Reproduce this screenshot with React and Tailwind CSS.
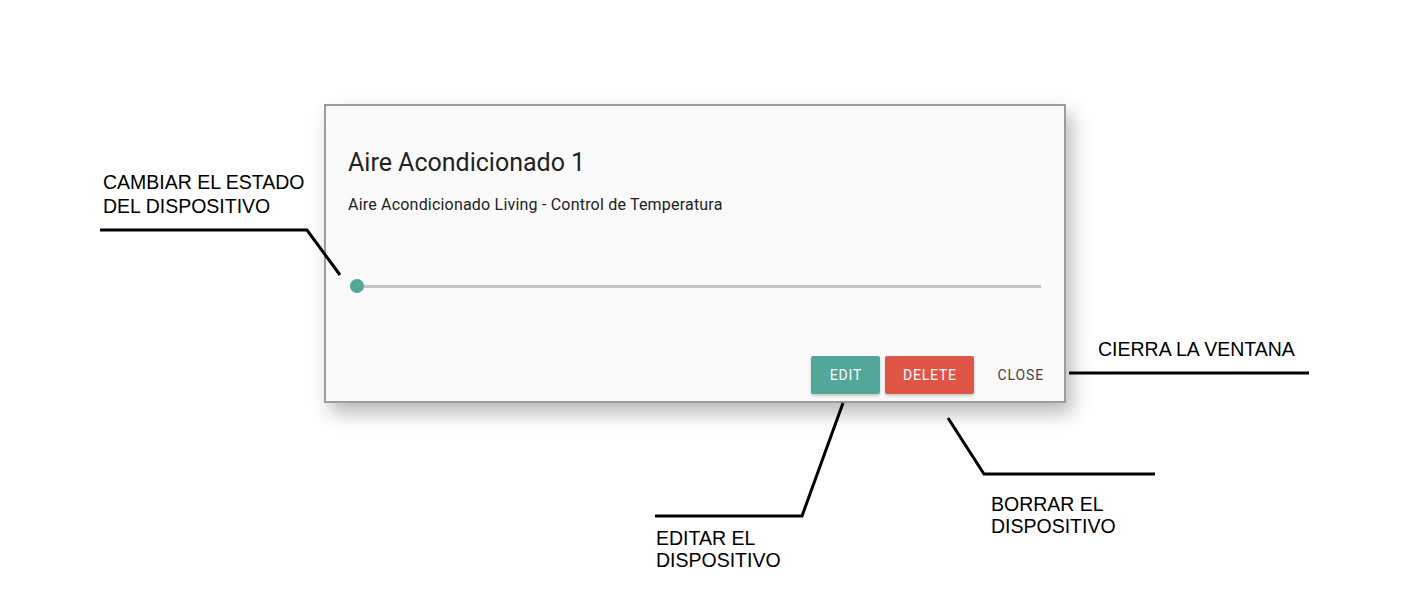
import React from "react";

const label = "absolute text-[19.5px] text-black uppercase whitespace-nowrap";
const labelFont = { fontFamily: '"Liberation Sans", Arial, sans-serif' };

export default function App() {
  return (
    <div className="relative w-[1406px] h-[614px] bg-white overflow-hidden" style={{ fontFamily: 'Roboto, "Noto Sans", sans-serif' }}>
      {/* Dialog */}
      <div className="ml-[324px] pt-[104px]">
        <div className="w-[742px] h-[299px] border-2 border-[#9c9c9c] bg-[#fafafa] shadow-[6px_10px_18px_rgba(0,0,0,0.28)] flex flex-col">
          <div className="px-[22px] pt-[41px]">
            <h4 className="text-[25px] leading-[32px] text-[#222] font-normal">Aire Acondicionado 1</h4>
            <p className="mt-[16px] text-[16px] leading-[20px] tracking-[0.2px] text-[#222]">Aire Acondicionado Living - Control de Temperatura</p>
          </div>
          <div className="mt-[64px] pl-[24px] pr-[23px]">
            <div className="relative h-[14px] flex items-center">
              <div className="w-full h-[3px] bg-[#c4c4c4]" />
              <div className="absolute left-0 top-0 w-[14px] h-[14px] rounded-full bg-[#52a69a]" />
            </div>
          </div>
          <div className="mt-auto pb-[7px] pr-[5px] flex justify-end items-center gap-[5px]">
            <button className="h-[38px] w-[69px] rounded-[2px] bg-[#52a69a] text-white text-[14px] tracking-[0.8px] shadow-[0_2px_3px_rgba(0,0,0,0.2)]">EDIT</button>
            <button className="h-[38px] w-[89px] rounded-[2px] bg-[#e15546] text-white text-[14px] tracking-[0.8px] shadow-[0_2px_3px_rgba(0,0,0,0.2)]">DELETE</button>
            <button className="h-[38px] ml-[2px] pl-[16px] pr-[15px] text-[#444] text-[14px] tracking-[0.9px]">CLOSE</button>
          </div>
        </div>
      </div>

      {/* Callout lines */}
      <svg className="absolute left-0 top-0" width="1406" height="614" fill="none" stroke="#000" strokeWidth="3">
        <polyline points="100,230 307,230 340,275" />
        <polyline points="843,403 802,516 655,516" />
        <polyline points="948,418 984,474 1155,474" />
        <line x1="1069" y1="373" x2="1309" y2="373" />
      </svg>

      {/* Labels */}
      <div className={`${label} left-[103px] top-[170px] leading-[24px]`} style={labelFont}>
        CAMBIAR EL ESTADO<br />DEL DISPOSITIVO
      </div>
      <div className={`${label} left-[1098px] top-[337px] leading-[24px]`} style={labelFont}>
        CIERRA LA VENTANA
      </div>
      <div className={`${label} left-[656px] top-[527px] leading-[22px]`} style={labelFont}>
        EDITAR EL<br />DISPOSITIVO
      </div>
      <div className={`${label} left-[991px] top-[493px] leading-[22px]`} style={labelFont}>
        BORRAR EL<br />DISPOSITIVO
      </div>
    </div>
  );
}
